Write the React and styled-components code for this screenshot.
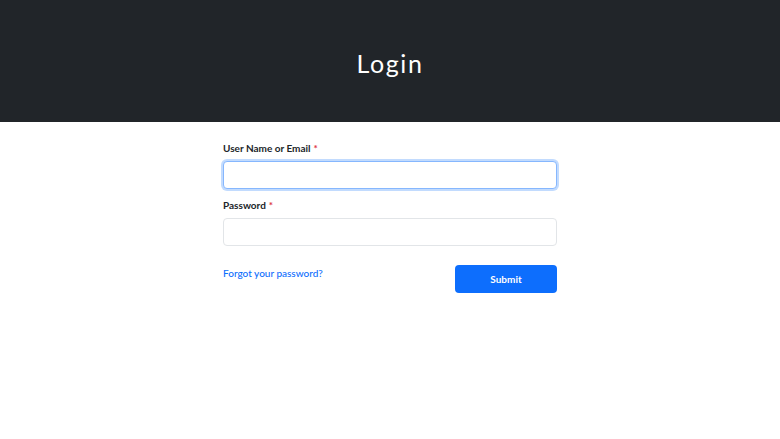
import React from "react";
import styled, { createGlobalStyle } from "styled-components";

const Global = createGlobalStyle`
  html, body { margin: 0; padding: 0; background: #fff; }
  body { font-family: Lato, "Noto Sans", sans-serif; color: #212529; }
  * { box-sizing: border-box; }
`;

const Header = styled.header`
  height: 122px;
  background: #212529;
  display: flex;
  align-items: center;
  justify-content: center;
`;

const Title = styled.h1`
  margin: 0;
  color: #fff;
  font-family: Lato, "Open Sans", sans-serif;
  font-weight: 400;
  font-size: 25px;
  letter-spacing: 1.6px;
  line-height: 30px;
  transform: translateY(2px);
`;

const Form = styled.form`
  width: 334px;
  margin: 0 auto;
  padding-top: 19px;
  display: flex;
  flex-direction: column;
`;

const Field = styled.div`
  display: flex;
  flex-direction: column;
  margin-bottom: ${(p) => p.$gap || 0}px;
`;

const Label = styled.label`
  font-size: 10px;
  font-weight: 700;
  color: #212529;
  line-height: 14px;
  margin-bottom: 6px;
`;

const Required = styled.span`
  color: #dc3545;
  margin-left: 3px;
`;

const Input = styled.input`
  width: 100%;
  height: 28px;
  border: 1px solid ${(p) => (p.$focus ? "#86b7fe" : "#e2e5e8")};
  border-radius: 4px;
  outline: none;
  box-shadow: ${(p) => (p.$focus ? "0 0 0 2px rgba(13,110,253,0.25)" : "none")};
  font-family: inherit;
  font-size: 10px;
  padding: 0 8px;
`;

const Actions = styled.div`
  display: flex;
  justify-content: space-between;
  align-items: flex-start;
  margin-top: 19px;
`;

const Link = styled.a`
  color: #0d6efd;
  font-size: 10px;
  font-weight: 500;
  text-decoration: none;
  line-height: 14px;
  margin-top: 1px;
`;

const Button = styled.button`
  width: 102px;
  height: 28px;
  padding: 0;
  background: #0d6efd;
  color: #fff;
  border: none;
  border-radius: 4px;
  font-family: inherit;
  font-size: 10px;
  font-weight: 700;
`;

export default function App() {
  return (
    <>
      <Global />
      <Header>
        <Title>Login</Title>
      </Header>
      <Form onSubmit={(e) => e.preventDefault()}>
        <Field $gap={9}>
          <Label>
            User Name or Email<Required>*</Required>
          </Label>
          <Input $focus />
        </Field>
        <Field>
          <Label>
            Password<Required>*</Required>
          </Label>
          <Input type="password" />
        </Field>
        <Actions>
          <Link href="#">Forgot your password?</Link>
          <Button type="submit">Submit</Button>
        </Actions>
      </Form>
    </>
  );
}
